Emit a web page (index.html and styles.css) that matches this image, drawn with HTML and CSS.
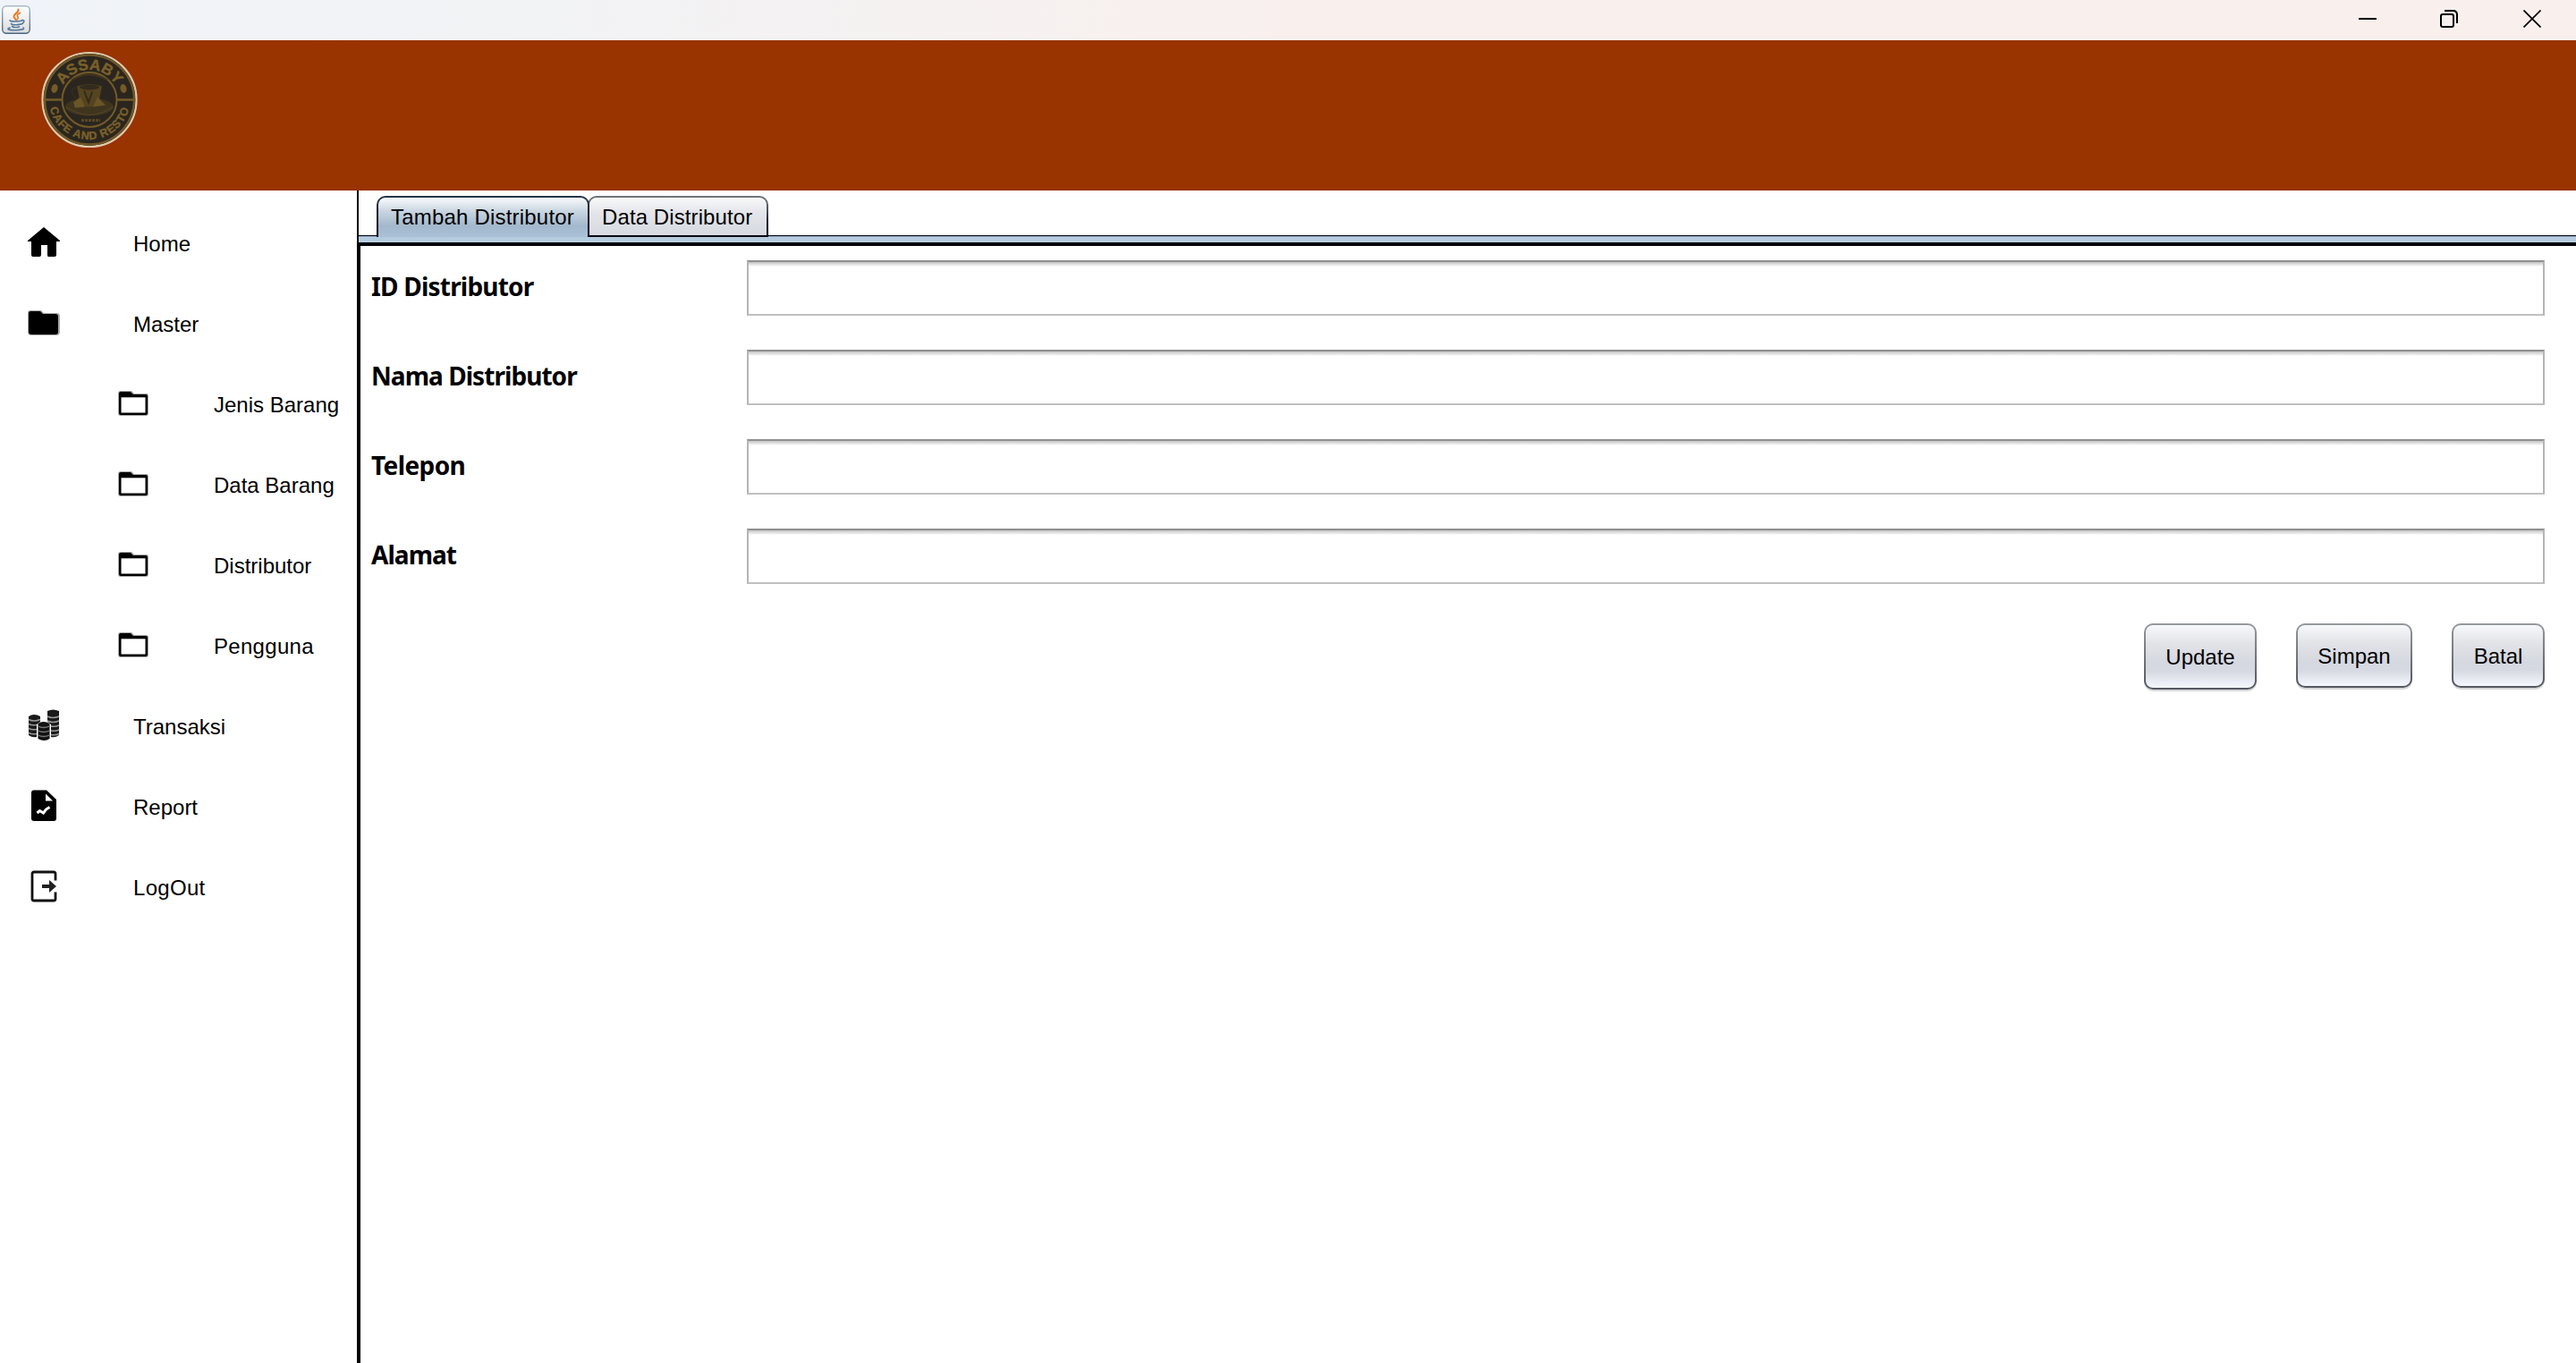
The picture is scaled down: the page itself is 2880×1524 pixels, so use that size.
FILE: index.html
```html
<!DOCTYPE html>
<html lang="id">
<head>
<meta charset="utf-8">
<title>Distributor</title>
<link rel="stylesheet" href="styles.css">
</head>
<body>
<svg class="defs" aria-hidden="true">
  <symbol id="folder" viewBox="0 0 36 30">
    <path fill="#a8a8a8" d="M3 0h12l3 3h14q2 0 2 3v19q0 3-3 3H3q-3 0-3-3V3q0-3 3-3z"/>
    <path d="M3 1h11l3 3h14q2 0 2 2v19q0 2-2 2H3q-2 0-2-2V3q0-2 2-2z"/>
    <path fill="#fff" d="M3.500 7.300h27v17.200h-27z"/>
  </symbol>
</svg>
<header class="titlebar">
  <svg class="java" viewBox="0 0 32 32">
    <defs><linearGradient id="jb" x2="0" y2="1"><stop offset="0" stop-color="#fff"/><stop offset="1" stop-color="#dcdcdc"/></linearGradient>
    <linearGradient id="js" x2="0" y2="1"><stop offset="0" stop-color="#a9bac9"/><stop offset="1" stop-color="#48657c"/></linearGradient></defs>
    <rect x=".7" y=".7" width="30.6" height="30.6" rx="4.5" fill="url(#jb)" stroke="url(#js)" stroke-width="1.4"/>
    <g fill="none" stroke="#e87722" stroke-width="2" stroke-linecap="round"><path d="M18.500 4.500c1 4-5.500 4.500-5 8 .2 1.800 2 2.500 2.500 4"/><path d="M20.500 8.500c-4 1.500-3.500 3-2.500 4.500.8 1.200 0 2-.7 2.700" stroke-width="1.600"/></g>
    <g fill="none" stroke="#557a9c" stroke-width="1.600" stroke-linecap="round"><path d="M9 17c2 1.500 11 1.200 13.500 0M22.500 16.500c4-.7 2.500 4-1.500 4.800M10.500 20.500c1 1.800 8 1.500 10 .5M11.500 23.500c2 1.500 6 1.200 8 .4M9 25c-5 2 0 2.800 7 2.700 6-.1 10-1.200 8-2.700"/></g>
  </svg>
  <div class="controls">
    <svg viewBox="0 0 20 20"><path d="M0 10h20"/></svg>
    <svg viewBox="0 0 20 20"><rect x="1" y="5" width="14" height="14" rx="2"/><path d="M5 1h9.500q4.500 0 4.500 4.500V15"/></svg>
    <svg viewBox="0 0 20 20"><path d="M.5.5l19 19m0-19l-19 19"/></svg>
  </div>
</header>
<div class="banner">
  <svg class="logo" viewBox="0 0 120 120">
    <defs><path id="arcTop" d="M26.500 60A33.500 33.500 0 0 1 93.500 60"/><path id="arcBottom" d="M14.500 59A45.500 45.500 0 0 0 105.500 59"/></defs>
    <circle cx="60" cy="60" r="52.500" fill="#2a261f" stroke="#dfc9ae" stroke-width="2.200"/>
    <circle cx="60" cy="60" r="50" fill="none" stroke="#6f5726" stroke-width="2.400"/>
    <circle cx="60" cy="60" r="30.500" fill="none" stroke="#755b27" stroke-width="2"/>
    <path d="M11 60h18m62 0h18" stroke="#755b27" stroke-width="2.400"/>
    <ellipse cx="21" cy="47.500" rx="3.500" ry="5" fill="#755b27" transform="rotate(15 21 47.500)"/>
    <ellipse cx="98" cy="47.500" rx="3.500" ry="5" fill="#755b27" transform="rotate(-15 98 47.500)"/>
    <text class="logo-name" text-anchor="middle"><textPath href="#arcTop" startOffset="50%">ASSABY</textPath></text>
    <text class="logo-sub" text-anchor="middle"><textPath href="#arcBottom" startOffset="50%">CAFE AND RESTO</textPath></text>
    <ellipse cx="60" cy="68" rx="27" ry="10" fill="#3f351f"/>
    <path d="M34 68q26 18 52 0" fill="none" stroke="#594722"/>
    <path d="M46 45q14-5 28 0l-3 15q-3 8-11 8t-11-8z" fill="#54441f"/>
    <ellipse cx="60" cy="46" rx="11" ry="3" fill="#332b1e"/>
    <path d="M54 50l5 13 4-12M46 47q-7-1-5 6 2 6 8 5" fill="none" stroke="#332b1e" stroke-width="2"/>
    <path d="M42 63l8-6 5 11-11 1zM64 68l5-11 9 9z" fill="#6b5526"/>
    <path d="M40 38q20-12 40 0" fill="none" stroke="#40351f" stroke-width="2"/>
    <path d="M51 83h21" stroke="#5a4824" stroke-width="3" stroke-dasharray="3 1"/>
  </svg>
</div>
<div class="workspace">
  <nav class="sidebar">
    <a class="item"><svg class="icon" viewBox="0 0 36 34"><path d="M18 0l18 15v1h-4v15q0 2-2 2h-7q-1 0-1-2V20h-7v11q0 2-2 2H6q-2 0-2-2V16H0v-1z"/></svg><span>Home</span></a>
    <a class="item"><svg class="icon" viewBox="0 0 36 34"><path fill="#aaa" d="M3 3h12l3 3h14q4 0 4 3v18q0 4-4 4H4q-4 0-4-4V6q0-3 3-3z"/><path d="M3 4h11l3 3h14q3 0 3 3v17q0 3-3 3H4q-3 0-3-3V7q0-3 2-3z"/></svg><span>Master</span></a>
    <a class="item sub"><svg class="icon"><use href="#folder" width="36" height="30"/></svg><span>Jenis Barang</span></a>
    <a class="item sub"><svg class="icon"><use href="#folder" width="36" height="30"/></svg><span>Data Barang</span></a>
    <a class="item sub"><svg class="icon"><use href="#folder" width="36" height="30"/></svg><span>Distributor</span></a>
    <a class="item sub"><svg class="icon"><use href="#folder" width="36" height="30"/></svg><span class="wide">Pengguna</span></a>
    <a class="item"><svg class="icon tall" viewBox="0 0 36 36">
      <path d="M1 8q6-4 13 0v6l-4 3v14q-5 1-9-2zM22 2q6-3 13 0v27q-4 3-9 2V17l-4-3z" fill="#1a1a1a"/>
      <path d="M1 11.500q6 3 13 0M1 16.500q4 2 9 1M1 21.500q4 2 9 1M1 26.500q4 2 9 1M22 8q6 3 13 0M22 13q6 3 13 0M26 19q5 1 9-1M26 24q5 1 9-1M26 28.500q5 1 9-1" fill="none" stroke="#999" stroke-width="1.500"/>
      <path d="M11.500 16q6-4 13 0v17q-6 4-13 0z" fill="#111"/>
      <path d="M11.500 19q6 3 13 0M11.500 24q6 3 13 0M11.500 29q6 3 13 0" fill="none" stroke="#777" stroke-width="1.300"/>
    </svg><span>Transaksi</span></a>
    <a class="item"><svg class="icon tall" viewBox="0 0 36 36"><path d="M7 .5h14l11 10.500v21q0 3-3 3H7q-3 0-3-3v-28.500q0-3 3-3z"/><path fill="#fff" d="M20 4.500v8h8z"/><path d="M10.500 26l3-2.500 4 2.500 3-4 4-2.500" fill="none" stroke="#fff" stroke-width="3"/></svg><span>Report</span></a>
    <a class="item"><svg class="icon tall" viewBox="0 0 36 36"><path d="M31 11.500V4q0-2-2-2H7Q5 2 5 4v28q0 2 2 2h22q2 0 2-2v-7.500" fill="none" stroke="#111" stroke-width="2.800"/><path d="M16 16h8v-5l8 7-8 7v-5h-8z" fill="#222"/></svg><span class="wide">LogOut</span></a>
  </nav>
  <main class="content">
    <div class="tabs">
      <div class="tab active">Tambah Distributor</div>
      <div class="tab">Data Distributor</div>
    </div>
    <div class="strip"></div>
    <form class="panel">
      <label class="row"><span class="caption id">ID Distributor</span><input class="field" type="text"></label>
      <label class="row"><span class="caption nama">Nama Distributor</span><input class="field" type="text"></label>
      <label class="row"><span class="caption">Telepon</span><input class="field" type="text"></label>
      <label class="row"><span class="caption nama">Alamat</span><input class="field" type="text"></label>
      <div class="actions">
        <button type="button" class="btn update">Update</button>
        <button type="button" class="btn simpan">Simpan</button>
        <button type="button" class="btn batal">Batal</button>
      </div>
    </form>
  </main>
</div>
</body>
</html>
```
FILE: styles.css
```css
* { box-sizing: border-box; }
body {
  margin: 0;
  height: 1524px;
  display: flex;
  flex-direction: column;
  overflow: hidden;
  background: #fff;
  color: #000;
  font: 24px "Liberation Sans", Arial, sans-serif;
}
.defs { display: none; }

.titlebar {
  height: 45px;
  flex: none;
  display: flex;
  justify-content: space-between;
  padding: 0 39px 0 2px;
  background: linear-gradient(90deg, #f0f3f9 0, #f2f3f5 20%, #f4f2f3 30%, #f9f0ee 50%, #f9f0ee 100%);
}
.java { width: 32px; height: 32px; margin-top: 6px; }
.controls { display: flex; padding-top: 11px; }
.controls svg {
  width: 20px;
  height: 20px;
  margin-left: 71px;
  fill: none;
  stroke: #000;
  stroke-width: 2;
}
.controls svg:last-child { margin-left: 73px; stroke-width: 1.700; }

.banner { height: 168px; flex: none; padding: 6px 0 0 40px; background: #993300; }
.logo { display: block; width: 120px; height: 121px; }
.logo text { fill: #7b6029; stroke: #7b6029; stroke-width: 0.4px; font-weight: bold; }
.logo .logo-name { font-size: 17px; }
.logo .logo-sub { font-size: 12.500px; letter-spacing: 0.8px; }

.workspace { flex: 1; display: flex; min-height: 0; }
.sidebar { width: 399px; flex: none; padding-top: 15px; }
.item {
  height: 90px;
  display: flex;
  align-items: center;
  padding-left: 31px;
}
.item span { margin-left: 82px; white-space: nowrap; }
.item .wide { letter-spacing: 0.3px; }
.item .icon { width: 36px; height: 34px; margin-top: -4px; }
.item .tall { height: 36px; margin-top: -4px; }
.item.sub { padding-left: 132px; }
.item.sub span { margin-left: 71px; }
.item.sub .icon { height: 30px; margin-top: -2px; }

.content { flex: 1; display: flex; flex-direction: column; min-width: 0; }
.tabs {
  height: 51px;
  display: flex;
  align-items: flex-end;
  padding: 0 0 0 20px;
  border-left: 2px solid #000;
  border-bottom: 1px solid #00000f;
}
.tab {
  position: relative;
  width: 202px;
  height: 46px;
  margin: 0 0 -2px -2px;
  padding-left: 14px;
  line-height: 43px;
  letter-spacing: 0.1px;
  white-space: nowrap;
  border: 2px solid transparent;
  border-radius: 10px 10px 0 0;
  background: linear-gradient(#f9f9fb, #e4e5ea 40%, #d6d9e1) padding-box,
    linear-gradient(#70757a, #4c5159 35%, #000012 80%) border-box;
}
.tab.active {
  width: 238px;
  margin-left: 0;
  z-index: 1;
  border-bottom: 0;
  letter-spacing: 0.2px;
  background: linear-gradient(#fafbfc, #c8d5e1 35%, #a3b8cc 72%, #a9c0d7) padding-box,
    linear-gradient(#23384a, #10182a 50%, #000012) border-box;
}
.strip {
  height: 7px;
  border-left: 2px solid #000;
  background: linear-gradient(#8795ad 0, #b3cadf 1px, #b9d0e2);
}
.panel {
  flex: 1;
  padding: 16px 35px 0 12px;
  border-left: 4px solid #000;
  border-top: 4px solid #000009;
}
.row { display: flex; height: 62px; margin-bottom: 38px; }
.caption {
  width: 420px;
  line-height: 59px;
  font-family: "Noto Sans", "Open Sans", sans-serif;
  font-weight: 700;
  font-size: 28px;
  white-space: nowrap;
  letter-spacing: -0.6px;
}
.caption.id { letter-spacing: -0.8px; }
.caption.nama { letter-spacing: -0.95px; }
.field {
  flex: 1;
  height: 62px;
  padding: 0 12px;
  border: 2px solid #b5b5b5;
  border-top-color: #8f8f8f;
  border-bottom-color: #c0c0c0;
  background: linear-gradient(#c4c4c4, #dadada 2px, #f2f2f2 4px, #fff 5px);
  font: inherit;
  outline: 0;
}
.actions { display: flex; justify-content: flex-end; align-items: flex-start; padding-top: 6px; gap: 44px; }
.btn {
  width: 126px;
  height: 72px;
  padding: 1px 0 0;
  border: 2px solid transparent;
  border-radius: 10px;
  color: #000;
  font: inherit;
  background: linear-gradient(#f7f8fa, #e2e3e7 30%, #d5d8e0 60%, #d6d9e1 74%, #f4f7fe) padding-box,
    linear-gradient(#959a9e, #7b8084 35%, #53565e) border-box;
  box-shadow: 0 2px 0 #d5d6d8;
}
.btn.update { height: 74px; }
.btn.simpan { width: 130px; padding-top: 2px; }
.btn.batal { width: 104px; padding-top: 2px; }
```
